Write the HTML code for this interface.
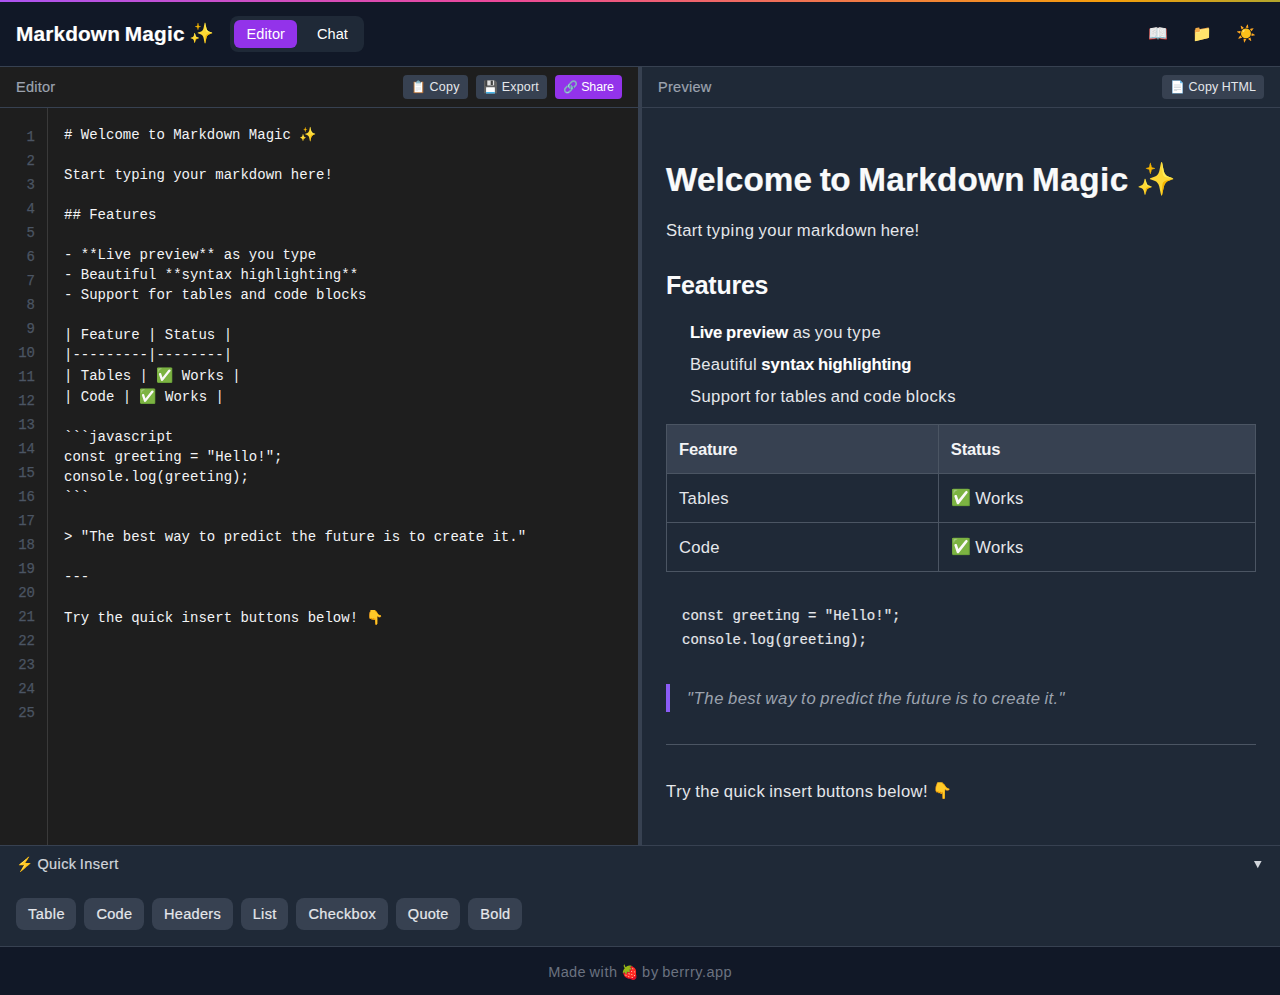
<!DOCTYPE html>
<html lang="en">
<head>
<meta charset="utf-8">
<title>Markdown Magic</title>
<style>
*{box-sizing:border-box;margin:0;padding:0}
html,body{width:1280px;height:995px;overflow:hidden;background:#111827}
body{font-family:"Liberation Sans",sans-serif;color:#f3f4f6;position:relative}
.b,.t,.e{position:absolute}
.t{white-space:pre;font-weight:400}
.e,.ie{overflow:visible}
.e{white-space:pre;font-family:"Noto Color Emoji","Liberation Sans",sans-serif;color:#f3f4f6}
.ie{display:inline-block;width:17.02px;font-family:"Noto Color Emoji","Liberation Mono",monospace}
/* header */
#grad{left:0;top:0;width:1280px;height:2px;background:linear-gradient(to right,#a855f7 -30px,#ec4899 500px,#f59e0b 1110px,#10b981 1700px)}
#hdr{left:0;top:2px;width:1280px;height:65px;background:#111827;border-bottom:1px solid #374151}
#tabs{left:230.45px;top:16px;width:133.45px;height:36px;background:#1f2937;border-radius:8px}
#tabE{left:234.45px;top:20px;width:62.5px;height:28px;background:#9333ea;border-radius:6px}
/* panel headers */
#edh{left:0;top:67px;width:638px;height:41px;background:#1e1e1e;border-bottom:1px solid #374151}
#pvh{left:642px;top:67px;width:638px;height:41px;background:#1f2937;border-bottom:1px solid #374151}
#divider{left:638px;top:67px;width:4px;height:778px;background:#374151}
.btn{top:75px;height:24px;background:#374151;border-radius:4px}
.btn.p{background:#9333ea}
/* editor */
#ed{left:0;top:108px;width:638px;height:737px;background:#1e1e1e}
#gut{left:0;top:108px;width:48px;height:737px;border-right:1px solid #3a3a3a}
#nums{left:0;top:125px;width:35px;-webkit-text-stroke:0.25px;text-align:right;font-family:"Liberation Mono",monospace;font-size:14px;line-height:24px;color:#4b5563}
#code{left:64px;top:124px;font-family:"Liberation Mono",monospace;font-size:14px;line-height:20px;color:#f3f4f6;white-space:pre}
/* preview */
#pv{left:642px;top:108px;width:638px;height:737px;background:#1f2937}
#thbg{left:666px;top:424px;width:590px;height:49px;background:#374151}
.hl{left:666px;width:590px;height:1px;background:#4b5563}
.vl{top:424px;width:1px;height:148px;background:#4b5563}
#pcode{left:682px;top:604.42px;font-family:"Liberation Mono",monospace;font-size:14px;line-height:24px;color:#e5e7eb;white-space:pre;-webkit-text-stroke:0.2px}
#bq{left:666px;top:684px;width:4px;height:28px;background:#8b5cf6}
#hr{left:666px;top:744px;width:590px;height:1px;background:#4b5563}
/* quick insert */
#qi{left:0;top:845px;width:1280px;height:101px;background:#1f2937;border-top:1px solid #374151}
.qb{top:898px;height:32px;background:#374151;border-radius:8px}
#tri{left:1253px;top:860px;width:10px;height:10px}
/* footer */
#ft{left:0;top:946px;width:1280px;height:49px;background:#111827;border-top:1px solid #374151}
</style>
</head>
<body>
<div id="grad" class="b"></div>
<div id="hdr" class="b"></div>
<div id="tabs" class="b"></div>
<div id="tabE" class="b"></div>

<div id="edh" class="b"></div>
<div id="pvh" class="b"></div>
<div class="b btn" style="left:403px;width:65px"></div>
<div class="b btn" style="left:476px;width:71px"></div>
<div class="b btn p" style="left:555px;width:67px"></div>
<div class="b btn" style="left:1162.14px;width:101.86px"></div>

<div id="ed" class="b"></div>
<div id="gut" class="b"></div>
<div id="nums" class="b">1<br>2<br>3<br>4<br>5<br>6<br>7<br>8<br>9<br>10<br>11<br>12<br>13<br>14<br>15<br>16<br>17<br>18<br>19<br>20<br>21<br>22<br>23<br>24<br>25</div>
<pre id="code" class="b"># Welcome to Markdown Magic <span class="ie">✨</span>

Start typing your markdown here!

## Features

- **Live preview** as you type
- Beautiful **syntax highlighting**
- Support for tables and code blocks

| Feature | Status |
|---------|--------|
| Tables | <span class="ie">✅</span> Works |
| Code | <span class="ie">✅</span> Works |

```javascript
const greeting = &quot;Hello!&quot;;
console.log(greeting);
```

&gt; &quot;The best way to predict the future is to create it.&quot;

---

Try the quick insert buttons below! <span class="ie">👇</span></pre>

<div id="pv" class="b"></div>
<div id="divider" class="b"></div>
<div id="thbg" class="b"></div>
<div class="b hl" style="top:424px"></div>
<div class="b hl" style="top:473px"></div>
<div class="b hl" style="top:522px"></div>
<div class="b hl" style="top:571px"></div>
<div class="b vl" style="left:666px"></div>
<div class="b vl" style="left:938px"></div>
<div class="b vl" style="left:1255px"></div>
<pre id="pcode" class="b">const greeting = "Hello!";
console.log(greeting);</pre>
<div id="bq" class="b"></div>
<div id="hr" class="b"></div>

<div id="qi" class="b"></div>
<div class="b qb" style="left:16px;width:60.48px"></div>
<div class="b qb" style="left:84.48px;width:59.61px"></div>
<div class="b qb" style="left:152.09px;width:80.58px"></div>
<div class="b qb" style="left:240.67px;width:47.75px"></div>
<div class="b qb" style="left:296.42px;width:91.44px"></div>
<div class="b qb" style="left:395.86px;width:64.5px"></div>
<div class="b qb" style="left:468.36px;width:53.84px"></div>
<svg id="tri" class="b" viewBox="0 0 10 10"><path d="M1 1h7.6l-3.8 7.2z" fill="#d1d5db"/></svg>

<div id="ft" class="b"></div>

<span class="t" style="left:16.00px;top:24.00px;font-size:20.80px;line-height:20.80px;letter-spacing:0.152px;color:#ffffff;font-weight:700;-webkit-text-stroke:0.18px">Markdown</span>
<span class="t" style="left:124.64px;top:24.00px;font-size:20.80px;line-height:20.80px;letter-spacing:0.281px;color:#ffffff;font-weight:700;-webkit-text-stroke:0.18px">Magic</span>
<span class="t" style="left:246.45px;top:27.00px;font-size:14.56px;line-height:14.56px;letter-spacing:0.097px;color:#ffffff">Editor</span>
<span class="t" style="left:316.95px;top:27.00px;font-size:14.56px;line-height:14.56px;letter-spacing:0.073px;color:#ffffff">Chat</span>
<span class="t" style="left:16.00px;top:80.00px;font-size:14.56px;line-height:14.56px;letter-spacing:0.222px;color:#9ca3af;-webkit-text-stroke:0.2px">Editor</span>
<span class="t" style="left:429.62px;top:81.00px;font-size:12.48px;line-height:12.48px;letter-spacing:0.240px;color:#e5e7eb">Copy</span>
<span class="t" style="left:501.83px;top:81.00px;font-size:12.48px;line-height:12.48px;letter-spacing:0.178px;color:#e5e7eb">Export</span>
<span class="t" style="left:581.14px;top:81.00px;font-size:12.48px;line-height:12.48px;letter-spacing:-0.105px;color:#ffffff">Share</span>
<span class="t" style="left:658.00px;top:80.00px;font-size:14.56px;line-height:14.56px;letter-spacing:0.253px;color:#9ca3af;-webkit-text-stroke:0.2px">Preview</span>
<span class="t" style="left:1188.52px;top:81.00px;font-size:12.48px;line-height:12.48px;letter-spacing:0.240px;color:#e5e7eb">Copy</span>
<span class="t" style="left:1221.70px;top:81.00px;font-size:12.48px;line-height:12.48px;letter-spacing:0.115px;color:#e5e7eb">HTML</span>
<span class="t" style="left:666.00px;top:163.36px;font-size:33.28px;line-height:33.28px;letter-spacing:0.102px;color:#f9fafb;font-weight:700;-webkit-text-stroke:0.24px">Welcome</span>
<span class="t" style="left:819.64px;top:163.36px;font-size:33.28px;line-height:33.28px;letter-spacing:-0.375px;color:#f9fafb;font-weight:700;-webkit-text-stroke:0.24px">to</span>
<span class="t" style="left:858.25px;top:163.36px;font-size:33.28px;line-height:33.28px;letter-spacing:0.250px;color:#f9fafb;font-weight:700;-webkit-text-stroke:0.24px">Markdown</span>
<span class="t" style="left:1032.08px;top:163.36px;font-size:33.28px;line-height:33.28px;letter-spacing:0.457px;color:#f9fafb;font-weight:700;-webkit-text-stroke:0.24px">Magic</span>
<span class="t" style="left:666.00px;top:223.42px;font-size:16.64px;line-height:16.64px;letter-spacing:0.242px;color:#e5e7eb">Start</span>
<span class="t" style="left:706.56px;top:223.42px;font-size:16.64px;line-height:16.64px;letter-spacing:0.622px;color:#e5e7eb">typing</span>
<span class="t" style="left:758.55px;top:223.42px;font-size:16.64px;line-height:16.64px;letter-spacing:0.474px;color:#e5e7eb">your</span>
<span class="t" style="left:796.80px;top:223.42px;font-size:16.64px;line-height:16.64px;letter-spacing:0.379px;color:#e5e7eb">markdown</span>
<span class="t" style="left:880.64px;top:223.42px;font-size:16.64px;line-height:16.64px;letter-spacing:0.145px;color:#e5e7eb">here!</span>
<span class="t" style="left:666.00px;top:272.50px;font-size:24.96px;line-height:24.96px;letter-spacing:-0.217px;color:#f9fafb;font-weight:700">Features</span>
<span class="t" style="left:690.00px;top:325.16px;font-size:16.64px;line-height:16.64px;letter-spacing:-0.354px;color:#ffffff;font-weight:700;-webkit-text-stroke:0.1px">Live</span>
<span class="t" style="left:726.00px;top:325.16px;font-size:16.64px;line-height:16.64px;letter-spacing:0.065px;color:#ffffff;font-weight:700;-webkit-text-stroke:0.1px">preview</span>
<span class="t" style="left:792.81px;top:325.16px;font-size:16.64px;line-height:16.64px;letter-spacing:-0.125px;color:#e5e7eb">as</span>
<span class="t" style="left:814.73px;top:325.16px;font-size:16.64px;line-height:16.64px;letter-spacing:0.469px;color:#e5e7eb">you</span>
<span class="t" style="left:846.97px;top:325.16px;font-size:16.64px;line-height:16.64px;letter-spacing:0.745px;color:#e5e7eb">type</span>
<span class="t" style="left:690.00px;top:357.16px;font-size:16.64px;line-height:16.64px;letter-spacing:0.258px;color:#e5e7eb">Beautiful</span>
<span class="t" style="left:761.27px;top:357.16px;font-size:16.64px;line-height:16.64px;letter-spacing:0.075px;color:#ffffff;font-weight:700;-webkit-text-stroke:0.1px">syntax</span>
<span class="t" style="left:818.11px;top:357.16px;font-size:16.64px;line-height:16.64px;letter-spacing:-0.156px;color:#ffffff;font-weight:700;-webkit-text-stroke:0.1px">highlighting</span>
<span class="t" style="left:690.00px;top:389.16px;font-size:16.64px;line-height:16.64px;letter-spacing:0.365px;color:#e5e7eb">Support</span>
<span class="t" style="left:754.92px;top:389.16px;font-size:16.64px;line-height:16.64px;letter-spacing:0.836px;color:#e5e7eb">for</span>
<span class="t" style="left:780.48px;top:389.16px;font-size:16.64px;line-height:16.64px;letter-spacing:0.275px;color:#e5e7eb">tables</span>
<span class="t" style="left:830.73px;top:389.16px;font-size:16.64px;line-height:16.64px;letter-spacing:0.242px;color:#e5e7eb">and</span>
<span class="t" style="left:863.47px;top:389.16px;font-size:16.64px;line-height:16.64px;letter-spacing:0.599px;color:#e5e7eb">code</span>
<span class="t" style="left:905.83px;top:389.16px;font-size:16.64px;line-height:16.64px;letter-spacing:0.503px;color:#e5e7eb">blocks</span>
<span class="t" style="left:679.00px;top:441.98px;font-size:16.64px;line-height:16.64px;letter-spacing:-0.242px;color:#f3f4f6;font-weight:700">Feature</span>
<span class="t" style="left:950.83px;top:441.98px;font-size:16.64px;line-height:16.64px;letter-spacing:-0.250px;color:#f3f4f6;font-weight:700">Status</span>
<span class="t" style="left:679.00px;top:490.98px;font-size:16.64px;line-height:16.64px;letter-spacing:0.306px;color:#e5e7eb">Tables</span>
<span class="t" style="left:975.33px;top:490.98px;font-size:16.64px;line-height:16.64px;letter-spacing:0.309px;color:#e5e7eb">Works</span>
<span class="t" style="left:679.00px;top:539.98px;font-size:16.64px;line-height:16.64px;letter-spacing:0.219px;color:#e5e7eb">Code</span>
<span class="t" style="left:975.33px;top:539.98px;font-size:16.64px;line-height:16.64px;letter-spacing:0.309px;color:#e5e7eb">Works</span>
<span class="t" style="left:687.00px;top:691.25px;font-size:16.64px;line-height:16.64px;letter-spacing:0.635px;color:#9ca3af;font-style:italic">&quot;The</span>
<span class="t" style="left:727.97px;top:691.25px;font-size:16.64px;line-height:16.64px;letter-spacing:0.422px;color:#9ca3af;font-style:italic">best</span>
<span class="t" style="left:765.17px;top:691.25px;font-size:16.64px;line-height:16.64px;letter-spacing:0.906px;color:#9ca3af;font-style:italic">way</span>
<span class="t" style="left:801.05px;top:691.25px;font-size:16.64px;line-height:16.64px;letter-spacing:0.828px;color:#9ca3af;font-style:italic">to</span>
<span class="t" style="left:820.25px;top:691.25px;font-size:16.64px;line-height:16.64px;letter-spacing:0.495px;color:#9ca3af;font-style:italic">predict</span>
<span class="t" style="left:877.61px;top:691.25px;font-size:16.64px;line-height:16.64px;letter-spacing:0.406px;color:#9ca3af;font-style:italic">the</span>
<span class="t" style="left:906.03px;top:691.25px;font-size:16.64px;line-height:16.64px;letter-spacing:0.525px;color:#9ca3af;font-style:italic">future</span>
<span class="t" style="left:955.67px;top:691.25px;font-size:16.64px;line-height:16.64px;letter-spacing:0.312px;color:#9ca3af;font-style:italic">is</span>
<span class="t" style="left:972.48px;top:691.25px;font-size:16.64px;line-height:16.64px;letter-spacing:0.828px;color:#9ca3af;font-style:italic">to</span>
<span class="t" style="left:991.69px;top:691.25px;font-size:16.64px;line-height:16.64px;letter-spacing:0.406px;color:#9ca3af;font-style:italic">create</span>
<span class="t" style="left:1044.44px;top:691.25px;font-size:16.64px;line-height:16.64px;letter-spacing:0.344px;color:#9ca3af;font-style:italic">it.&quot;</span>
<span class="t" style="left:666.00px;top:784.25px;font-size:16.64px;line-height:16.64px;letter-spacing:0.648px;color:#e5e7eb">Try</span>
<span class="t" style="left:695.19px;top:784.25px;font-size:16.64px;line-height:16.64px;letter-spacing:0.453px;color:#e5e7eb">the</span>
<span class="t" style="left:723.70px;top:784.25px;font-size:16.64px;line-height:16.64px;letter-spacing:0.562px;color:#e5e7eb">quick</span>
<span class="t" style="left:769.27px;top:784.25px;font-size:16.64px;line-height:16.64px;letter-spacing:0.391px;color:#e5e7eb">insert</span>
<span class="t" style="left:816.38px;top:784.25px;font-size:16.64px;line-height:16.64px;letter-spacing:0.354px;color:#e5e7eb">buttons</span>
<span class="t" style="left:877.55px;top:784.25px;font-size:16.64px;line-height:16.64px;letter-spacing:0.388px;color:#e5e7eb">below!</span>
<span class="t" style="left:37.42px;top:857.00px;font-size:14.56px;line-height:14.56px;letter-spacing:0.363px;color:#d1d5db;-webkit-text-stroke:0.2px">Quick</span>
<span class="t" style="left:79.78px;top:857.00px;font-size:14.56px;line-height:14.56px;letter-spacing:0.406px;color:#d1d5db;-webkit-text-stroke:0.2px">Insert</span>
<span class="t" style="left:28.00px;top:907.00px;font-size:14.56px;line-height:14.56px;letter-spacing:0.426px;color:#e5e7eb;-webkit-text-stroke:0.2px">Table</span>
<span class="t" style="left:96.48px;top:907.00px;font-size:14.56px;line-height:14.56px;letter-spacing:0.276px;color:#e5e7eb;-webkit-text-stroke:0.2px">Code</span>
<span class="t" style="left:164.09px;top:907.00px;font-size:14.56px;line-height:14.56px;letter-spacing:0.266px;color:#e5e7eb;-webkit-text-stroke:0.2px">Headers</span>
<span class="t" style="left:252.67px;top:907.00px;font-size:14.56px;line-height:14.56px;letter-spacing:0.370px;color:#e5e7eb;-webkit-text-stroke:0.2px">List</span>
<span class="t" style="left:308.42px;top:907.00px;font-size:14.56px;line-height:14.56px;letter-spacing:0.393px;color:#e5e7eb;-webkit-text-stroke:0.2px">Checkbox</span>
<span class="t" style="left:407.86px;top:907.00px;font-size:14.56px;line-height:14.56px;letter-spacing:0.215px;color:#e5e7eb;-webkit-text-stroke:0.2px">Quote</span>
<span class="t" style="left:480.36px;top:907.00px;font-size:14.56px;line-height:14.56px;letter-spacing:0.240px;color:#e5e7eb;-webkit-text-stroke:0.2px">Bold</span>
<span class="t" style="left:548.31px;top:965.00px;font-size:14.56px;line-height:14.56px;letter-spacing:0.286px;color:#6b7280">Made</span>
<span class="t" style="left:589.48px;top:965.00px;font-size:14.56px;line-height:14.56px;letter-spacing:0.615px;color:#6b7280">with</span>
<span class="t" style="left:642.06px;top:965.00px;font-size:14.56px;line-height:14.56px;letter-spacing:0.812px;color:#6b7280">by</span>
<span class="t" style="left:662.17px;top:965.00px;font-size:14.56px;line-height:14.56px;letter-spacing:0.476px;color:#6b7280">berrry.app</span>

<span class="e" style="left:189px;top:22.45px;font-size:20px;line-height:23.44px">✨</span>
<span class="e" style="left:1148px;top:25.16px;font-size:16px;line-height:18.75px">📖</span>
<span class="e" style="left:1192px;top:25.16px;font-size:16px;line-height:18.75px">📁</span>
<span class="e" style="left:1236px;top:25.16px;font-size:16px;line-height:18.75px">☀️</span>
<span class="e" style="left:411px;top:79.87px;font-size:12px;line-height:14.06px">📋</span>
<span class="e" style="left:483px;top:79.87px;font-size:12px;line-height:14.06px">💾</span>
<span class="e" style="left:563px;top:79.87px;font-size:12px;line-height:14.06px">🔗</span>
<span class="e" style="left:1170px;top:79.87px;font-size:12px;line-height:14.06px">📄</span>
<span class="e" style="left:1136px;top:161.31px;font-size:32px;line-height:37.5px">✨</span>
<span class="e" style="left:951px;top:489.16px;font-size:16px;line-height:18.75px">✅</span>
<span class="e" style="left:951px;top:538.16px;font-size:16px;line-height:18.75px">✅</span>
<span class="e" style="left:932px;top:782.16px;font-size:16px;line-height:18.75px">👇</span>
<span class="e" style="left:16px;top:856.01px;font-size:14px;line-height:16.41px">⚡</span>
<span class="e" style="left:621px;top:964.01px;font-size:14px;line-height:16.41px">🍓</span>
</body>
</html>
